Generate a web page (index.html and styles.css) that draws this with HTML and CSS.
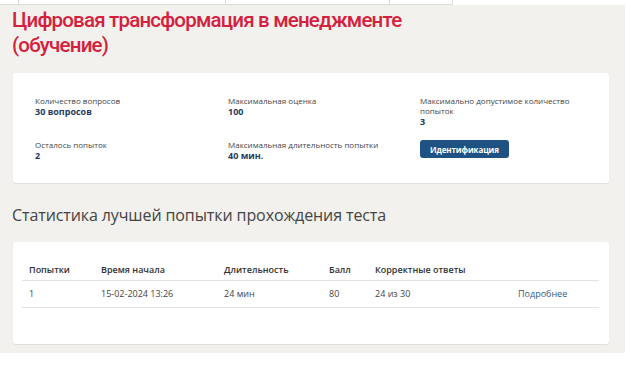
FILE: index.html
```html
<!DOCTYPE html>
<html lang="ru">
<head>
    <meta charset="UTF-8">
    <meta name="viewport" content="width=device-width, initial-scale=1.0">
    <title>Цифровая трансформация в менеджменте</title>
    <link rel="stylesheet" href="styles.css">
</head>
<body>
    <div class="tabs">
        <div class="tab tab-first"></div>
        <div class="tab tab-wide"></div>
        <div class="tab tab-mid"></div>
        <div class="tab tab-small"></div>
    </div>

    <div class="page">
        <h1 class="course-title">Цифровая трансформация в менеджменте (обучение)</h1>

        <div class="card info-card">
            <div class="info-grid">
                <div class="info-item">
                    <div class="info-label">Количество вопросов</div>
                    <div class="info-value">30 вопросов</div>
                </div>
                <div class="info-item">
                    <div class="info-label">Максимальная оценка</div>
                    <div class="info-value">100</div>
                </div>
                <div class="info-item">
                    <div class="info-label">Максимально допустимое количество попыток</div>
                    <div class="info-value">3</div>
                </div>
                <div class="info-item">
                    <div class="info-label">Осталось попыток</div>
                    <div class="info-value">2</div>
                </div>
                <div class="info-item">
                    <div class="info-label">Максимальная длительность попытки</div>
                    <div class="info-value">40 мин.</div>
                </div>
                <div class="info-item">
                    <button class="btn">Идентификация</button>
                </div>
            </div>
        </div>

        <h2 class="section-title">Статистика лучшей попытки прохождения теста</h2>

        <div class="card stats-card">
            <table class="stats-table">
                <thead>
                    <tr>
                        <th class="col-try">Попытки</th>
                        <th class="col-start">Время начала</th>
                        <th class="col-dur">Длительность</th>
                        <th class="col-score">Балл</th>
                        <th class="col-correct">Корректные ответы</th>
                        <th class="col-link"></th>
                    </tr>
                </thead>
                <tbody>
                    <tr>
                        <td>1</td>
                        <td>15-02-2024 13:26</td>
                        <td>24 мин</td>
                        <td>80</td>
                        <td>24 из 30</td>
                        <td><a href="#" class="more-link">Подробнее</a></td>
                    </tr>
                </tbody>
            </table>
        </div>
    </div>
</body>
</html>
```

FILE: styles.css
```css
* {
    margin: 0;
    padding: 0;
    box-sizing: border-box;
}

body {
    font-family: "Open Sans", "Noto Sans", sans-serif;
    background: white;
    color: #333;
}

.tabs {
    display: flex;
    height: 5px;
    width: 453px;
    border-bottom: 1px solid #dcdcdc;
}

.tab {
    border-right: 1px solid #dcdcdc;
    background: white;
}

.tab-first { width: 19px; }
.tab-wide { width: 207px; }
.tab-mid { width: 164px; }
.tab-small { width: 63px; }

.page {
    width: 625px;
    background: #f2f1ed;
    padding: 3px 16px 9px 13px;
}

.course-title {
    font-family: Roboto, "Noto Sans", sans-serif;
    font-weight: 500;
    font-size: 20.5px;
    letter-spacing: -0.8px;
    line-height: 25px;
    color: #d4213d;
    width: 412px;
    margin-left: -1px;
    margin-bottom: 15px;
}

.card {
    background: white;
    border-radius: 3px;
    box-shadow: 0 1px 1px rgba(0,0,0,0.08);
}

.info-card {
    height: 110px;
    padding: 23px 22px 0;
}

.info-grid {
    display: grid;
    grid-template-columns: 193px 192px 165px;
    row-gap: 13px;
}

.info-label {
    font-size: 8px;
    line-height: 10px;
    color: #444;
}

.info-value {
    font-size: 9px;
    line-height: 11px;
    font-weight: 700;
    color: #243b5e;
}

.btn {
    display: block;
    font-family: inherit;
    background: #1e5283;
    color: white;
    border: none;
    border-radius: 3px;
    font-size: 8px;
    font-weight: 700;
    height: 18px;
    padding: 0 10px;
    letter-spacing: -0.1px;
}

.section-title {
    font-weight: 400;
    font-size: 16px;
    letter-spacing: -0.1px;
    line-height: 20px;
    color: #444;
    margin: 22px 0 17px -1px;
}

.stats-card {
    height: 102px;
    padding: 17px 10px 0 9px;
}

.stats-table {
    width: 100%;
    border-collapse: collapse;
    font-size: 9px;
}

.stats-table th {
    text-align: left;
    font-weight: 600;
    color: #333;
    height: 21px;
    padding: 0 7px;
    border-bottom: 1px solid #e3e3e3;
}

.stats-table td {
    color: #444;
    height: 27px;
    padding: 0 7px;
    border-bottom: 1px solid #e3e3e3;
}

.col-try { width: 72px; }
.col-start { width: 123px; }
.col-dur { width: 105px; }
.col-score { width: 46px; }
.col-correct { width: 143px; }

.more-link {
    color: #2d5b8b;
    text-decoration: none;
}
```
